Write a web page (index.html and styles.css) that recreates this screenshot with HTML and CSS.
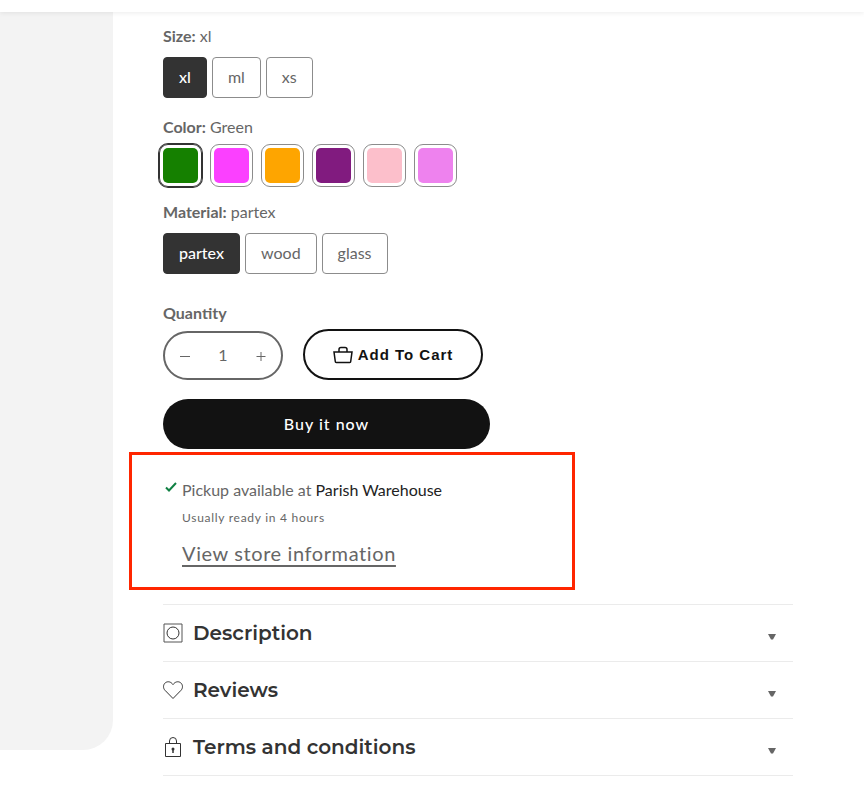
FILE: index.html
```html
<!DOCTYPE html>
<html lang="en">
<head>
    <meta charset="utf-8">
    <title>Product</title>
    <meta name="viewport" content="width=device-width, initial-scale=1.0">
    <link rel="stylesheet" href="styles.css">
</head>
<body>
    <header class="header"></header>
    <main class="product">
        <div class="gallery"></div>
        <form class="info" onsubmit="return false">
            <fieldset class="option">
                <legend><b>Size:</b> xl</legend>
                <div class="pills">
                    <label class="pill"><input type="radio" name="size" checked><span>xl</span></label>
                    <label class="pill"><input type="radio" name="size"><span>ml</span></label>
                    <label class="pill"><input type="radio" name="size"><span>xs</span></label>
                </div>
            </fieldset>

            <fieldset class="option option-color">
                <legend><b>Color:</b> Green</legend>
                <div class="swatches">
                    <label class="swatch green"><input type="radio" name="color" aria-label="Green" checked><span></span></label>
                    <label class="swatch magenta"><input type="radio" name="color" aria-label="Magenta"><span></span></label>
                    <label class="swatch orange"><input type="radio" name="color" aria-label="Orange"><span></span></label>
                    <label class="swatch purple"><input type="radio" name="color" aria-label="Purple"><span></span></label>
                    <label class="swatch pink"><input type="radio" name="color" aria-label="Pink"><span></span></label>
                    <label class="swatch violet"><input type="radio" name="color" aria-label="Violet"><span></span></label>
                </div>
            </fieldset>

            <fieldset class="option">
                <legend><b>Material:</b> partex</legend>
                <div class="pills">
                    <label class="pill"><input type="radio" name="material" checked><span>partex</span></label>
                    <label class="pill"><input type="radio" name="material"><span>wood</span></label>
                    <label class="pill"><input type="radio" name="material"><span>glass</span></label>
                </div>
            </fieldset>

            <label class="quantity-label" for="quantity">Quantity</label>
            <div class="buy-row">
                <div class="quantity">
                    <button type="button" aria-label="Decrease quantity">
                        <svg width="10" height="10" viewBox="0 0 10 10"><path d="M0 4.500h10"/></svg>
                    </button>
                    <input type="text" id="quantity" value="1" inputmode="numeric">
                    <button type="button" aria-label="Increase quantity">
                        <svg width="10" height="10" viewBox="0 0 10 10"><path d="M.5 4.500h9M5 0v9"/></svg>
                    </button>
                </div>
                <button type="submit" class="add-to-cart">
                    <svg width="20" height="18" viewBox="0 0 20 18"><path d="M1 6h18l-1.300 9.500a1 1 0 0 1-1 1H3.300a1 1 0 0 1-1-1zM6 6V3.500a2 2 0 0 1 2-2h4a2 2 0 0 1 2 2V6"/></svg>
                    Add To Cart
                </button>
            </div>
            <button type="button" class="buy-now">Buy it now</button>

            <section class="pickup">
                <svg class="check" width="12" height="10" viewBox="0 0 12 10"><path d="M1 5.500l3 3L11 1"/></svg>
                <div class="pickup-text">
                    <p>Pickup available at <span>Parish Warehouse</span></p>
                    <p class="caption">Usually ready in 4 hours</p>
                    <a href="#store">View store information</a>
                </div>
            </section>

            <div class="accordion">
                <details>
                    <summary>
                        <svg class="icon" width="20" height="20" viewBox="0 0 20 20"><path class="frame" d="M1 1h18v18H1z"/><circle cx="10" cy="10" r="6"/></svg>
                        <h2>Description</h2>
                        <svg class="caret" width="8" height="6" viewBox="0 0 8 6"><path d="M0 0h8L5 5.500H3z"/></svg>
                    </summary>
                </details>
                <details>
                    <summary>
                        <svg class="icon" width="20" height="20" viewBox="0 0 20 20"><path d="M10 18.500L2 10.300C-.2 8 .2 4.500 2.300 2.800 4.800.9 8 1.700 10 4.600c2-2.900 5.200-3.700 7.700-1.800 2.100 1.700 2.500 5.200.3 7.500z"/></svg>
                        <h2>Reviews</h2>
                        <svg class="caret" width="8" height="6" viewBox="0 0 8 6"><path d="M0 0h8L5 5.500H3z"/></svg>
                    </summary>
                </details>
                <details>
                    <summary>
                        <svg class="icon" width="20" height="20" viewBox="0 0 20 20"><path d="M2.500 6.500h15v13h-15zM6.500 6.500V4a3.500 3.500 0 0 1 7 0v2.500"/><path class="key" d="M10 12v4"/><circle class="dot" cx="10" cy="12" r="1.500"/></svg>
                        <h2>Terms and conditions</h2>
                        <svg class="caret" width="8" height="6" viewBox="0 0 8 6"><path d="M0 0h8L5 5.500H3z"/></svg>
                    </summary>
                </details>
            </div>
        </form>
    </main>
</body>
</html>
```
FILE: styles.css
```css
:root {
    --text-color: #666;
    --dark-color: #333;
    --black: #121212;
    --highlight: #ff2600;
}

* {
    box-sizing: border-box;
}

body {
    margin: 0;
    background-color: #fff;
    color: var(--text-color);
    font-family: Lato, "Liberation Sans", sans-serif;
    font-size: 16px;
    line-height: 20px;
}

button,
input {
    font: inherit;
    color: inherit;
}

svg {
    fill: none;
    stroke: currentColor;
    flex: none;
}

.header {
    position: relative;
    height: 12px;
    background-color: #fff;
    box-shadow: 0 1px 5px rgba(0,0,0,0.08);
}

.product {
    display: grid;
    grid-template-columns: 113px 1fr;
    padding-bottom: 14px;
}

.gallery {
    margin-bottom: 26px;
    background-color: #f3f3f3;
    border-radius: 0 0 30px 0;
}

.info {
    padding: 14px 71px 0 50px;
}

.option {
    margin: 0 0 19px;
    padding: 0;
    border: 0;
}

.option legend {
    padding: 0;
    margin-bottom: 11px;
}

.option-color {
    margin-bottom: 15px;
}

.option-color legend {
    margin-bottom: 7px;
}

.pills {
    display: flex;
    gap: 5px;
}

.pill input,
.swatch input {
    position: absolute;
    opacity: 0;
}

.pill span {
    display: block;
    padding: 9px 15px 10px;
    border: 1px solid #8c8c8c;
    border-radius: 4px;
}

.pill input:checked + span {
    background-color: var(--dark-color);
    border-color: var(--dark-color);
    color: #fff;
    font-weight: 500;
}

.swatches {
    display: flex;
    gap: 8px;
    margin-left: -4px;
}

.swatch span {
    display: block;
    width: 43px;
    height: 43px;
    padding: 3px;
    border: 1px solid #8c8c8c;
    border-radius: 9px;
}

.swatch span::before {
    content: "";
    display: block;
    height: 100%;
    border-radius: 5px;
    background-color: var(--swatch);
}

.swatch input:checked + span {
    border-color: var(--dark-color);
    box-shadow: 0 0 0 1px var(--dark-color);
}

.green { --swatch: #158000; }
.magenta { --swatch: #fb40ff; }
.orange { --swatch: #fea500; }
.purple { --swatch: #811b7f; }
.pink { --swatch: #fcbfcb; }
.violet { --swatch: #ee82ee; }

.quantity-label {
    display: block;
    margin-top: 29px;
    margin-bottom: 6px;
    font-weight: 700;
}

.buy-row {
    display: flex;
    align-items: flex-end;
    gap: 20px;
    margin-bottom: 19px;
}

.quantity {
    display: flex;
    width: 120px;
    height: 49px;
    border: 2px solid var(--text-color);
    border-radius: 25px;
}

.quantity button {
    flex: 0 0 40px;
    padding: 0;
    border: 0;
    background: none;
}

.quantity input {
    width: 100%;
    min-width: 0;
    padding: 0 0 2px;
    border: 0;
    background: none;
    text-align: center;
}

.add-to-cart {
    display: flex;
    align-items: center;
    justify-content: center;
    gap: 5px;
    width: 180px;
    height: 51px;
    padding: 0;
    border: 2px solid var(--black);
    border-radius: 26px;
    background-color: #fff;
    color: var(--black);
    font-family: "Liberation Sans", Arial, sans-serif;
    font-size: 15px;
    font-weight: 700;
    letter-spacing: 1px;
}

.add-to-cart svg {
    stroke-width: 1.5;
}

.buy-now {
    display: block;
    width: 327px;
    max-width: 100%;
    height: 50px;
    border: 0;
    border-radius: 25px;
    background-color: var(--black);
    color: #fff;
    font-weight: 500;
    letter-spacing: 1px;
}

/* pickup box reaches out past the left text edge */
.pickup {
    display: flex;
    gap: 5px;
    max-width: 446px;
    margin: 3px 0 14px -34px;
    padding: 25px 33px 20px;
    border: 3px solid var(--highlight);
}

.pickup p {
    margin: 0 0 9px;
}

.pickup p span {
    color: #222;
}

.pickup .caption {
    margin-bottom: 12px;
    font-size: 12px;
    line-height: 18px;
    letter-spacing: 0.06em;
}

.pickup a {
    color: inherit;
    font-size: 20px;
    line-height: 28px;
    letter-spacing: 0.03em;
    text-underline-offset: 4px;
    text-decoration-thickness: 2px;
}

.check {
    margin-top: 2px;
    stroke: #108043;
    stroke-width: 2;
}

.accordion {
    border-top: 1px solid #ebebeb;
}

.accordion details {
    border-bottom: 1px solid #ebebeb;
}

.accordion summary {
    display: flex;
    align-items: center;
    gap: 10px;
    height: 56px;
    padding-right: 17px;
    color: var(--dark-color);
    cursor: pointer;
    list-style: none;
}

.accordion h2 {
    flex: 1;
    margin: 0;
    font-family: Montserrat, Inter, sans-serif;
    font-size: 20px;
    font-weight: 600;
    line-height: 24px;
}

.icon .frame {
    stroke: #555;
}

.icon .key {
    stroke-width: 1.5;
}

.icon .dot {
    fill: currentColor;
    stroke: none;
}

.caret {
    margin-top: 8px;
    fill: var(--text-color);
    stroke: none;
}
```
